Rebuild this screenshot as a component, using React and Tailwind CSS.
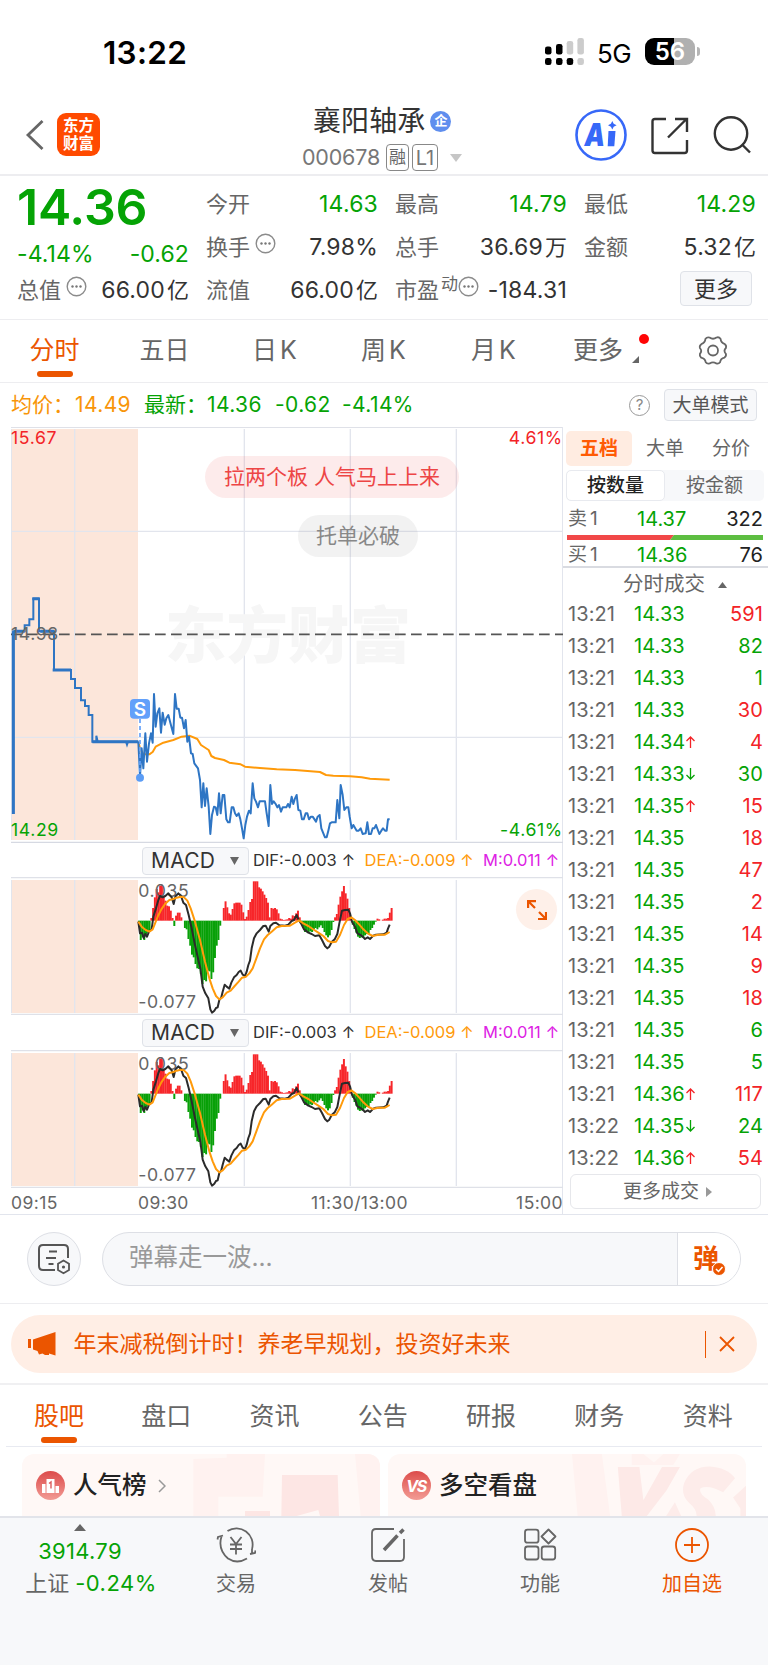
import React from 'react';

const font = "font-[Inter,'Noto_Sans_CJK_SC',sans-serif]";

const periods = [
  { label: '五日', width: 'w-[111px]' },
  { label: '日K', width: 'w-[109px]', latin: true },
  { label: '周K', width: 'w-[109px]', latin: true },
  { label: '月K', width: 'w-[111px]', latin: true },
];

const trades = [
  ['13:21', '14.33', '', 591, 'buy'],
  ['13:21', '14.33', '', 82, 'sell'],
  ['13:21', '14.33', '', 1, 'sell'],
  ['13:21', '14.33', '', 30, 'buy'],
  ['13:21', '14.34', 'up', 4, 'buy'],
  ['13:21', '14.33', 'down', 30, 'sell'],
  ['13:21', '14.35', 'up', 15, 'buy'],
  ['13:21', '14.35', '', 18, 'buy'],
  ['13:21', '14.35', '', 47, 'buy'],
  ['13:21', '14.35', '', 2, 'buy'],
  ['13:21', '14.35', '', 14, 'buy'],
  ['13:21', '14.35', '', 9, 'buy'],
  ['13:21', '14.35', '', 18, 'buy'],
  ['13:21', '14.35', '', 6, 'sell'],
  ['13:21', '14.35', '', 5, 'sell'],
  ['13:21', '14.36', 'up', 117, 'buy'],
  ['13:22', '14.35', 'down', 24, 'sell'],
  ['13:22', '14.36', 'up', 54, 'buy'],
];

// MACD histogram, one value per minute from 09:30
const histogram = [
  -15, -58, -50, -58, -42, -36, -30, 8, 38, 70, 95, 85, 105, 108, 75, 60, 45, 43, 30, 8, -16, 15, 24, 24, 10, 0,
  -22, -26, -55, -75, -102, -110, -130, -143, -145, -160, -190, -178, -182, -150, -152, -175, -155, -112, -75, -58,
  -15, 0, 38, 58, 40, 22, 18, 35, 52, 54, 54, 54, 48, 25, 5, 12, 32, 56, 65, 118, 118, 118, 100, 96, 88, 78, 68, 54,
  10, 38, 36, 38, 34, 22, 6, 4, 2, 3, 4, 8, 6, 16, 14, 22, 30, 10, -5, -20, -34, -32, -36, -32, -34, -26, -22, -26,
  -20, -14, -22, -34, -44, -50, -44, -28, -4, 10, 20, 48, 72, 88, 104, 82, 66, 38, 12, -12, -25, -36, -48, -52, -50,
  -52, -44, -40, -40, -28, -22, -12, -3, 6, 4, 0, 3, 6, 6, 8, 24, 38,
];

const auctionLine =
  '40,1182 40,634 74,634 74,616 88,616 88,598 100,598 100,536 117,536 117,634 162,634 162,750 213,750 213,777 225,777 225,804 243,804 243,841 255,841 255,858 266,858 266,885 277,885 277,965 289,965 289,947 293,965 378,965 381,974 384,965 415,965';

const priceLine =
  '415,965 420,1070 425,985 430,1045 436,940 441,1025 447,970 453,940 458,968 462,822 467,920 472,880 478,865 483,938 488,878 494,914 499,895 505,885 511,908 520,942 525,822 530,866 536,866 541,893 546,893 552,925 557,900 562,965 567,950 573,1000 578,1002 583,1030 594,1045 600,1080 605,1162 610,1090 615,1158 620,1105 626,1160 631,1242 636,1185 642,1160 647,1162 652,1185 657,1120 662,1180 668,1125 673,1125 679,1198 684,1207 689,1207 695,1162 700,1162 705,1180 710,1188 716,1180 721,1198 726,1225 731,1255 736,1215 741,1190 747,1172 752,1180 758,1090 763,1135 768,1145 774,1162 779,1144 795,1144 800,1180 806,1218 811,1095 816,1152 821,1144 827,1152 832,1162 837,1155 843,1175 848,1162 859,1162 864,1152 869,1162 875,1130 880,1152 885,1135 890,1125 895,1170 901,1172 906,1198 911,1198 917,1180 922,1180 927,1198 933,1190 938,1190 948,1205 953,1190 959,1185 964,1225 970,1240 975,1252 980,1252 985,1232 990,1210 995,1207 1007,1207 1012,1140 1018,1195 1022,1095 1028,1125 1033,1170 1039,1162 1045,1162 1049,1190 1055,1225 1060,1215 1070,1232 1076,1232 1082,1225 1088,1242 1097,1240 1102,1207 1107,1242 1113,1242 1118,1225 1123,1225 1128,1215 1138,1242 1144,1232 1149,1225 1155,1232 1160,1232 1164,1198 1169,1198';

const averageLine =
  '415,965 420,985 430,1003 448,1003 458,996 467,980 490,968 520,960 545,950 568,947 592,957 603,975 626,990 634,1008 645,1014 672,1020 688,1028 722,1033 735,1040 780,1044 830,1048 885,1050 960,1056 978,1065 1000,1067 1050,1069 1085,1072 1110,1076 1169,1079';

const difLine =
  '415,245 420,280 426,278 431,294 436,282 441,290 447,275 455,268 460,230 468,205 475,180 480,168 488,172 496,168 505,160 515,172 521,192 526,170 535,160 543,168 550,188 558,195 566,225 574,260 585,315 595,360 601,385 608,440 616,460 625,475 631,508 636,518 643,512 648,504 653,502 658,480 664,472 668,455 674,434 680,440 688,446 694,428 702,412 710,405 716,396 722,392 728,404 735,408 740,395 745,375 750,362 755,325 762,295 770,280 780,270 790,258 797,257 806,275 811,258 820,250 828,248 838,256 855,257 865,254 875,243 882,240 890,225 896,240 903,250 912,268 925,278 935,282 945,288 958,286 966,300 975,318 982,325 988,320 995,306 1004,298 1012,282 1018,250 1026,212 1035,210 1045,209 1050,220 1056,245 1066,262 1072,280 1080,284 1088,290 1095,297 1103,292 1110,297 1120,287 1128,284 1150,283 1160,278 1164,266 1169,254';

const deaLine =
  '415,245 425,260 437,270 448,275 458,268 466,248 474,228 484,208 495,192 508,180 520,177 530,173 542,170 552,172 562,182 572,205 585,245 600,300 615,365 628,415 638,445 648,468 658,478 668,472 680,458 692,452 704,438 716,425 726,413 738,410 748,400 758,385 768,358 780,325 792,298 803,285 815,275 830,262 845,258 870,257 885,248 897,241 910,250 925,258 938,267 955,278 970,288 984,303 996,307 1008,305 1020,285 1032,255 1043,237 1054,232 1065,240 1078,254 1090,268 1103,280 1118,288 1135,284 1155,284 1169,276';

const boardTabs = ['盘口', '资讯', '公告', '研报', '财务', '资料'];

const Dots = () => (
  <svg className="shrink-0" width="21" height="21" viewBox="0 0 21 21" fill="none">
    <circle cx="10.5" cy="10.5" r="9.3" stroke="#8b8b8b" strokeWidth="1.4" />
    <circle cx="6.5" cy="10.5" r="1.2" fill="#777" />
    <circle cx="10.5" cy="10.5" r="1.2" fill="#777" />
    <circle cx="14.5" cy="10.5" r="1.2" fill="#777" />
  </svg>
);

const Stat = ({ label, value, unit, green, extra }) => (
  <div className="flex h-full items-center justify-between whitespace-nowrap">
    <span className="flex items-center text-[22px] text-[#666]">
      {label}
      {extra}
    </span>
    <span className={green ? 'text-[23px] tracking-[0.2px] text-[#05a305]' : 'text-[23px] tracking-[0.2px] text-[#333]'}>
      {value}
      {unit && <span className="ml-[2px] text-[22px] tracking-normal">{unit}</span>}
    </span>
  </div>
);

const StatusBar = () => (
  <div className="flex h-[95px] items-start pt-[35px] pl-[103px]">
    <span className="w-[442px] text-[31.5px] leading-[35px] font-semibold tracking-[0.3px] text-black">13:22</span>
    <svg className="mt-[3px]" width="39" height="28" viewBox="0 0 39 28">
      <g fill="#000">
        <rect x="0" y="8.5" width="6.500" height="8" rx="2.300" />
        <rect x="11" y="6" width="6.500" height="10.500" rx="2.300" />
        <rect x="0" y="20" width="6.500" height="7" rx="2.300" />
        <rect x="11" y="20" width="6.500" height="7" rx="2.300" />
        <rect x="21.700" y="20" width="6.500" height="7" rx="2.300" />
      </g>
      <g fill="#ccc">
        <rect x="21.700" y="3" width="6.500" height="13.500" rx="2.300" />
        <rect x="32.400" y="0" width="6.500" height="16.500" rx="2.300" />
        <rect x="32.400" y="20" width="6.500" height="7" rx="2.300" />
      </g>
    </svg>
    <span className="ml-[13px] w-[48px] text-[26px] leading-[37px] tracking-tight text-black">5G</span>
    <div className="mt-[3px] flex h-[27px] w-[50px] items-center justify-center rounded-[9px] bg-linear-to-r from-black from-57% to-[#b0b0b0] to-57% text-[24px] font-semibold text-white">
      56
    </div>
    <div className="mt-[12px] ml-[1.5px] h-[9px] w-[3px] rounded-r-full bg-[#b5b5b5]" />
  </div>
);

const Header = () => (
  <header className="flex h-[81px] items-start border-b-2 border-[#ededf0]">
    <svg className="mt-[24px] ml-[25px]" width="20" height="32" viewBox="0 0 20 32" fill="none">
      <path d="M17.500 2 3 16l14.500 14" stroke="#666" strokeWidth="2.8" />
    </svg>
    <div className="mt-[18px] ml-[12px] flex h-[43px] w-[43px] flex-col items-center justify-center rounded-[9px] bg-[#ff4a00] text-[15.5px] leading-[18px] font-bold text-white">
      <span>东方</span>
      <span>财富</span>
    </div>
    <div className="ml-[198px] w-[277px] pl-[32px]">
      <div className="mt-[9px] -ml-[17px] flex h-[34px] items-center text-[28px] text-[#333]">
        <span className="tracking-[0.1px]">襄阳轴承</span>
        <span className="ml-[5px] flex h-[21px] w-[21px] items-center justify-center rounded-full bg-[#5f8eee] text-[13px] font-bold text-white">
          企
        </span>
      </div>
      <div className="-ml-[28px] flex h-[39px] items-center whitespace-nowrap text-[21.500px] text-[#777]">
        <span className="w-[84px] tracking-[-0.2px]">000678</span>
        <span className="mr-[3px] flex h-[27px] w-[23px] items-center justify-center rounded-[4px] border-[1.5px] border-[#888] text-[17px] text-[#666]">
          融
        </span>
        <span className="flex h-[27px] w-[26px] items-center justify-center rounded-[4px] border-[1.5px] border-[#888] text-[20px]">
          L1
        </span>
        <svg className="ml-[12px]" width="12" height="8" viewBox="0 0 12 8">
          <path d="M0 0h12L6 8z" fill="#c6c6c6" />
        </svg>
      </div>
    </div>
    <svg className="mt-[14px]" width="52" height="52" viewBox="0 0 52 52">
      <circle cx="26" cy="26" r="24.500" fill="none" stroke="#3768f8" strokeWidth="2.600" />
      <text x="9.500" y="37" fontSize="31" fontWeight="900" fontStyle="italic" fill="#3768f8" textLength="20.500" lengthAdjust="spacingAndGlyphs">
        A
      </text>
      <path d="M33.500 22h7l-1.200 15.200h-6.600z" fill="#3768f8" />
      <path d="m37.300 12 1.400 2.800 2.900 1.500-2.900 1.500-1.400 2.800-1.400-2.800-2.900-1.500 2.900-1.500z" fill="#3768f8" />
    </svg>
    <svg className="mt-[21px] ml-[23px]" width="40" height="40" viewBox="0 0 40 40" fill="none" stroke="#333" strokeWidth="2.400">
      <path d="M16 3H5Q2.500 3 2.500 5.500v29Q2.500 37 5 37h29.500q2.500 0 2.500-2.500V24M18 21.500 36.500 3M25 3h12v13" />
    </svg>
    <svg className="mt-[20px] ml-[22px]" width="42" height="42" viewBox="0 0 42 42" fill="none" stroke="#333" strokeWidth="2.400">
      <circle cx="19" cy="18.500" r="16.200" />
      <path d="m30 29.500 8 8" />
    </svg>
  </header>
);

const Quote = () => (
  <section className="h-[144px] border-b border-[#ededf0] pt-[7px] pl-[17px]">
    <div className="grid h-[129px] grid-cols-[172px_172px_172px_172px] gap-x-[17px]">
      <div className="flex flex-col">
        <span className="h-[48px] text-[50px] leading-[48px] font-semibold tracking-[-0.2px] text-[#05a305]">14.36</span>
        <div className="flex h-[38px] items-end justify-between text-[23px] leading-[29px] tracking-[0.1px] text-[#05a305]">
          <span>-4.14%</span>
          <span>-0.62</span>
        </div>
        <div className="h-[43px]">
          <Stat label="总值" value="66.00" unit="亿" extra={<span className="mb-2 ml-[5px]"><Dots /></span>} />
        </div>
      </div>
      <div className="grid grid-rows-3">
        <Stat label="今开" value="14.63" green />
        <Stat label="换手" value="7.98%" extra={<span className="mb-2 ml-[5px]"><Dots /></span>} />
        <Stat label="流值" value="66.00" unit="亿" />
      </div>
      <div className="grid grid-rows-3">
        <Stat label="最高" value="14.79" green />
        <Stat label="总手" value="36.69" unit="万" />
        <Stat
          label="市盈"
          value="-184.31"
          extra={
            <span className="mb-2 flex items-center">
              <span className="-mt-1 ml-[2px] text-[17px]">动</span>
              <Dots />
            </span>
          }
        />
      </div>
      <div className="grid grid-rows-3">
        <Stat label="最低" value="14.29" green />
        <Stat label="金额" value="5.32" unit="亿" />
        <div className="flex items-center justify-end pr-[4px] pb-[4px]">
          <button className="h-[35px] w-[72px] rounded-[4px] border-[1.5px] border-[#dfe2e8] bg-[#f7f8fa] text-[22px] leading-none text-[#333]">
            更多
          </button>
        </div>
      </div>
    </div>
  </section>
);

const PeriodTabs = () => (
  <nav className="flex h-[63px] items-center border-b border-[#ededf0] text-[25px] text-[#666]">
    <div className="relative flex h-full w-[109px] items-center justify-center text-[#eb5500]">
      分时
      <i className="absolute bottom-[5px] h-[6px] w-[36px] rounded-[3px] bg-[#eb5500]" />
    </div>
    {periods.map((p) => (
      <div key={p.label} className={`flex justify-center ${p.width}`}>
        {p.latin ? (
          <>
            {p.label[0]}
            <span className="ml-[3px]">K</span>
          </>
        ) : (
          p.label
        )}
      </div>
    ))}
    <div className="relative w-[102px] pl-[24px]">
      更多
      <i className="absolute top-[2px] left-[90px] h-[10px] w-[10px] rounded-full bg-[#ff0505]" />
      <svg className="absolute top-[24px] left-[83px]" width="7" height="7" viewBox="0 0 7 7">
        <path d="M7 0v7H0z" fill="#666" />
      </svg>
    </div>
    <svg className="-mt-[3px] ml-[46px]" width="32" height="32" viewBox="0 0 32 32" fill="none" stroke="#666" strokeWidth="1.800">
      <path
        strokeLinejoin="round"
        d="M12.500 3.500q3.500 2.500 7 0 2.500-.8 4 1.200.4 4.200 4.400 5.500 1.800 1.300 1 3.800-2.800 2.800 0 5.800.6 2.400-1.400 3.800-4 .8-4.400 4.600-1.600 2-3.800 1.200-3.300-2-6.600 0-2.600.8-4-1.200-.6-3.800-4.600-4.600-1.800-1.600-1.200-3.800 2.600-2.900 0-5.800-.6-2.500 1.400-3.800 3.800-1.200 4.200-5.500 1.500-1.900 4-1.200z"
      />
      <circle cx="16" cy="16.500" r="5" />
    </svg>
  </nav>
);

const PriceSummary = () => (
  <div className="flex h-[44px] items-center pr-[11px] pl-[11px] text-[21px] whitespace-nowrap">
    <span className="w-[64px] text-[#f89509]">均价：</span>
    <span className="w-[69px] tracking-[0.4px] text-[#f89509]">14.49</span>
    <span className="w-[63px] text-[#05a305]">最新：</span>
    <span className="w-[68px] tracking-[0.4px] text-[#05a305]">14.36</span>
    <span className="w-[67px] tracking-[0.4px] text-[#05a305]">-0.62</span>
    <span className="tracking-[0.4px] text-[#05a305]">-4.14%</span>
    <span className="ml-auto flex h-[21px] w-[21px] items-center justify-center rounded-full border-[1.5px] border-[#999] text-[15px] text-[#888]">
      ?
    </span>
    <button className="ml-[14px] h-[32px] w-[93px] rounded-[4px] border-[1.5px] border-[#dfe2e8] bg-[#f7f8fa] text-[19px] leading-none text-[#555]">
      大单模式
    </button>
  </div>
);

const Grid = ({ top, bottom }) => (
  <g>
    <rect x="33" y={top} width="381" height={bottom - top} fill="#fce6da" />
    <path d={`M34 ${top}V${bottom}M224 ${top}V${bottom}M733 ${top}V${bottom}M1051 ${top}V${bottom}M1369 ${top}V${bottom}`} stroke="#e2e5ed" strokeWidth="4" />
  </g>
);

const PriceChart = () => (
  <div className="relative h-[416px]">
    <svg width="552" height="416" viewBox="33 21 1656 1248" fill="none">
      <Grid top={27} bottom={1260} />
      <path d="M33 334H1689M33 952H1689" stroke="#e2e5ed" strokeWidth="4" />
      <path d="M33 1267H1689" stroke="#d6d9e2" strokeWidth="4" />
      <text x="495" y="714" fontSize="184" fontWeight="900" fill="#f6f6f6" textLength="738">
        东方财富
      </text>
      <path d="M33 643H1689" stroke="#555" strokeWidth="5" strokeDasharray="32 16" />
      <polyline points={averageLine} stroke="#ff9a0a" strokeWidth="6" strokeLinejoin="round" />
      <polyline points={auctionLine} stroke="#2e75c4" strokeWidth="6" />
      <path d="M40 1182V634M42 634H74M121 634H162M158 750H213M277 965H415M97 536H119" stroke="#2e75c4" strokeWidth="9" />
      <polyline points={priceLine} stroke="#2e75c4" strokeWidth="6" strokeLinejoin="round" />
      <path d="M420 897V1060" stroke="#62a0fa" strokeWidth="5" strokeDasharray="12 9" />
      <circle cx="420" cy="1073" r="12" fill="#5b9cf5" />
      <rect x="390" y="837" width="60" height="59" rx="12" fill="#62a0fa" />
      <text x="420" y="887" fontSize="57" fontWeight="600" fill="#fff" textAnchor="middle">
        S
      </text>
      <g fontSize="53" letterSpacing="1.8">
        <text x="33" y="73" fill="#f32327">15.67</text>
        <text x="33" y="661" fill="#666">14.98</text>
        <text x="33" y="1247" fill="#05a305">14.29</text>
        <text x="1688" y="73" fill="#f32327" textAnchor="end">4.61%</text>
        <text x="1688" y="1247" fill="#05a305" textAnchor="end">-4.61%</text>
      </g>
    </svg>
    <span className="absolute top-[29px] left-[194px] flex h-[42px] w-[254px] items-center justify-center rounded-full bg-[#ed4545]/11 text-[21px] whitespace-nowrap text-[#ed4545]">
      拉两个板 人气马上上来
    </span>
    <span className="absolute top-[88px] left-[287px] flex h-[42px] w-[120px] items-center justify-center rounded-full bg-[#888]/11 text-[21px] whitespace-nowrap text-[#888]">
      托单必破
    </span>
  </div>
);

const MacdLegend = () => (
  <div className="flex h-[35px] items-center pl-[131px] text-[16.500px] whitespace-nowrap text-[#333]">
    <div className="mr-[4px] flex h-[28px] w-[107px] items-center justify-between rounded-[4px] border-[1.5px] border-[#dfe2e8] bg-[#f7f8fa] pr-[9px] pl-[8px] text-[21px] tracking-[0.2px]">
      MACD
      <svg width="9" height="8" viewBox="0 0 8 7">
        <path d="M0 0h8L4 7z" fill="#666" />
      </svg>
    </div>
    <span className="w-[111.500px]">DIF:-0.003 ↑</span>
    <span className="w-[118.500px] text-[#ff9a0a]">DEA:-0.009 ↑</span>
    <span className="text-[#dd22e4]">M:0.011 ↑</span>
  </div>
);

const MacdChart = ({ expand }) => (
  <div className="relative h-[138px]">
    <svg width="552" height="138" viewBox="33 111 1656 414" fill="none">
      <path d="M33 112.500H1689M33 523H1689" stroke="#dfe1e8" strokeWidth="4" />
      <Grid top={120} bottom={519} />
      {histogram.map((v, i) => (
        <rect
          key={i}
          x={414 + i * 5.3}
          y={v > 0 ? 242 - v : 242}
          width="5.9"
          height={Math.abs(v)}
          fill={v > 0 ? '#f7262a' : '#08a008'}
        />
      ))}
      <g fontSize="53" letterSpacing="1.8" fill="#666">
        <text x="415" y="170">0.035</text>
        <text x="415" y="503">-0.077</text>
      </g>
      <polyline points={difLine} stroke="#2b2b2b" strokeWidth="6" strokeLinejoin="round" />
      <polyline points={deaLine} stroke="#ff9a0a" strokeWidth="6" strokeLinejoin="round" />
    </svg>
    {expand && (
      <span className="absolute top-[12px] right-[6px] flex h-[41px] w-[41px] items-center justify-center rounded-full bg-[#fef0e9]">
        <svg width="20" height="20" viewBox="0 0 20 20" fill="none" stroke="#eb5500" strokeWidth="2.200">
          <path d="M1.100 8V1.100H9M1.500 1.500 8 8M19 12v7.000H11M18.500 18.500 12 12" />
        </svg>
      </span>
    )}
  </div>
);

const TradeArrow = ({ dir }) => (
  <svg className="ml-[1px]" width="9" height="12" viewBox="0 0 9 12" fill="none" stroke={dir === 'up' ? '#f32327' : '#05a305'} strokeWidth="1.300">
    <path d={dir === 'up' ? 'M4.500 12V1M.500 5l4-4 4 4' : 'M4.500 0v11M.500 7l4 4 4-4'} />
  </svg>
);

const OrderBook = () => (
  <aside className="-ml-[1px] flex w-[206px] flex-col border-l-[1.5px] border-[#e2e5ed] text-[19px] text-[#666]">
    <div className="mt-[4px] flex h-[35px] items-center">
      <span className="ml-[3px] flex h-[35px] w-[66px] items-center justify-center rounded-[5px] bg-[#ffece1] pt-[1px] font-bold text-[#ff5b05]">
        五档
      </span>
      <span className="w-[66px] pt-[2px] text-center">大单</span>
      <span className="w-[66px] pt-[2px] text-center">分价</span>
    </div>
    <div className="mt-[4px] ml-[3px] flex h-[31px] w-[198px] items-center rounded-[5px] bg-[#f7f8fa]">
      <span className="flex h-[31px] w-[99px] items-center justify-center rounded-[5px] border border-[#e8eaef] bg-white pt-[2px] font-medium text-[#222]">
        按数量
      </span>
      <span className="flex-1 pt-[2px] text-center">按金额</span>
    </div>
    <div className="flex h-[34px] items-center pt-[2px] pr-[5px] pl-[5px]">
      <span className="w-[69px]">
        卖<span className="ml-[3px]">1</span>
      </span>
      <span className="text-[20px] text-[#05a305]">14.37</span>
      <span className="ml-auto text-[20px] text-[#222]">322</span>
    </div>
    <svg className="ml-[4px]" width="196" height="5" viewBox="0 0 196 5">
      <path d="M0 0h107l-4 5H0z" fill="#f14848" />
      <path d="M107 0h89v5h-93z" fill="#5dbe41" />
    </svg>
    <div className="flex h-[28px] items-center border-b-2 border-[#d9dbe1] pt-[4px] pr-[5px] pl-[5px]">
      <span className="w-[69px]">
        买<span className="ml-[3px]">1</span>
      </span>
      <span className="text-[20px] text-[#05a305]">14.36</span>
      <span className="ml-auto text-[20px] text-[#222]">76</span>
    </div>
    <div className="flex h-[29px] items-center pt-[4px] pl-[60px] text-[20.500px]">
      分时成交
      <svg className="ml-[13px]" width="9" height="6" viewBox="0 0 9 6">
        <path d="M4.500 0 9 6H0z" fill="#666" />
      </svg>
    </div>
    {trades.map(([time, price, dir, volume, side], i) => (
      <div key={i} className="flex h-[32.06px] items-center pt-[1px] pr-[5px] pl-[5px] text-[20px] tracking-[0.1px]">
        <span className="w-[66px]">{time}</span>
        <span className="text-[#05a305]">{price}</span>
        {dir && <TradeArrow dir={dir} />}
        <span className={side === 'buy' ? 'ml-auto text-[#f32327]' : 'ml-auto text-[#05a305]'}>{volume}</span>
      </div>
    ))}
    <div className="ml-[7px] flex h-[35px] w-[191px] items-center justify-center rounded-[6px] border border-[#e6e7eb] pt-[2px]">
      <span className="ml-[4px]">更多成交</span>
      <svg className="ml-[7px]" width="6" height="10" viewBox="0 0 6 10">
        <path d="M0 0v10l6-5z" fill="#999" />
      </svg>
    </div>
  </aside>
);

const DanmuBar = () => (
  <section className="flex h-[89px] items-start border-b border-[#ededf0] pt-[17px]">
    <div className="ml-[27px] flex h-[54px] w-[54px] items-center justify-center rounded-full border border-[#dddfe5] bg-[#f7f8fa]">
      <svg width="34" height="32" viewBox="0 0 34 32" fill="none" stroke="#555" strokeWidth="2">
        <path d="M18 27H6q-4 0-4-4V6q0-4 4-4h21q4 0 4 4v9M12 8.500h8M9 15h10M11.500 21h5" />
        <path d="m26.500 17.500 5.500 3.200v6.400l-5.500 3.200-5.500-3.200v-6.400z" strokeWidth="1.800" />
        <circle cx="26.500" cy="24" r="1.600" fill="#555" stroke="none" />
      </svg>
    </div>
    <div className="ml-[21px] flex h-[54px] w-[639px] items-center overflow-hidden rounded-full border border-[#dddfe5] bg-[#f7f8fa]">
      <span className="flex-1 pb-[3px] pl-[26px] text-[24.500px] text-[#999]">弹幕走一波...</span>
      <div className="relative h-full w-[63px] border-l border-[#dddfe5] bg-white pt-[10px] pl-[15px] text-[26px] leading-[32px] font-bold text-[#eb5500]">
        弹
        <svg className="absolute top-[29px] left-[34px]" width="14" height="14" viewBox="0 0 14 14">
          <circle cx="7" cy="7" r="6.500" fill="#eb5500" stroke="#fff" />
          <path d="m4 7 2.500 2.500L10.500 5" fill="none" stroke="#fff" strokeWidth="1.500" />
        </svg>
      </div>
    </div>
  </section>
);

const Notice = () => (
  <section className="flex h-[81px] items-start border-b-2 border-[#f0f0f2] px-[11px] pt-[11px]">
    <div className="flex h-[58px] w-full items-center rounded-[29px] bg-[#ffeee5] text-[#eb5500]">
      <svg className="ml-[17px]" width="28" height="24" viewBox="0 0 28 24" fill="#eb5500">
        <path d="M0 7h3v9H0zM5 7.500 27.500 0v23.500L21 21.500v1.500h-4l-2.500-1.500-3.500 1-1.500-3.500L5 17.500z" />
      </svg>
      <span className="ml-[17.500px] text-[23px]">年末减税倒计时！养老早规划，投资好未来</span>
      <i className="ml-auto h-[27px] w-[1.500px] bg-[#eb5500]" />
      <svg className="mr-[22px] ml-[13px]" width="16" height="16" viewBox="0 0 16 16" fill="none" stroke="#eb5500" strokeWidth="1.800">
        <path d="m1 1 14 14M15 1 1 15" />
      </svg>
    </div>
  </section>
);

const BoardTabs = () => (
  <nav className="mx-[6px] flex h-[62px] items-center border-b-[1.5px] border-[#e8eaf1] text-[25px] text-[#666]">
    <div className="relative flex h-full w-[106px] items-center justify-center pt-[2px] text-[#eb5500]">
      股吧
      <i className="absolute bottom-[3px] h-[6px] w-[36px] rounded-[3px] bg-[#eb5500]" />
    </div>
    {boardTabs.map((t) => (
      <div key={t} className="w-[108.300px] pt-[2px] text-center">
        {t}
      </div>
    ))}
  </nav>
);

const Cards = () => (
  <section className="flex h-[69px] gap-[8px] overflow-hidden pt-[7px] pl-[22px]">
    <div className="relative h-[110px] w-[358px] overflow-hidden rounded-t-[12px] bg-[#fff8f6]">
      <svg className="absolute top-0 left-[170px]" width="188" height="62" viewBox="576 57 564 186">
        <path d="M580 72 680 68V57H795L788 185H655V243H580zM1065 57H1140V243H1082z" fill="#fff2f0" />
        <path d="M735 228H810V243H735zM846 120H1013L1017 243H960L955 225 890 243H844z" fill="#fde6e4" />
      </svg>
      <div className="relative flex h-[63px] items-center pl-[14px]">
        <svg width="29" height="29" viewBox="0 0 29 29">
          <defs>
            <linearGradient id="rankFill" x1="0" y1="0" x2="0" y2="1">
              <stop offset="0" stopColor="#dc4b4b" />
              <stop offset="1" stopColor="#f29b94" />
            </linearGradient>
          </defs>
          <circle cx="14.500" cy="14.500" r="14.500" fill="url(#rankFill)" />
          <path d="M6 13h3.500v9H6zM10.500 8h8v14h-8zM19.500 15H23v7h-3.500z" fill="#fff" />
          <path d="m13 12.500 2-1.500v6.500" stroke="#dc5b5b" strokeWidth="1.400" fill="none" />
        </svg>
        <span className="ml-[8px] text-[24.500px] font-medium text-[#222]">人气榜</span>
        <svg className="ml-[11px]" width="8" height="14" viewBox="0 0 8 14" fill="none" stroke="#999" strokeWidth="1.500">
          <path d="m1 1 6 6-6 6" />
        </svg>
      </div>
      <p className="relative -mt-[1px] pl-[28px] text-[22px] leading-[22px] text-[#999]">昨日排名较前上升</p>
    </div>
    <div className="relative h-[110px] w-[358px] overflow-hidden rounded-t-[12px] bg-[#fff8f6]">
      <svg className="absolute top-0 left-[180px]" width="178" height="62" viewBox="563 41 536 186">
        <path d="M575 41H665L690 228H592zM755 41H790L822 66 850 41H900L880 74H755z" fill="#fff2f0" />
        <path d="M713 80H778L790 180 846 80H900L860 150 800 228H725z" fill="#fde9e7" />
        <path d="M858 228 885 186 904 228zM912 130Q932 78 990 78 1045 82 1066 114L1030 156Q985 132 962 144 955 160 985 178 1008 200 1008 228H950Q952 208 928 188 902 165 912 130zM1099 136 1060 172 1082 205V228H1099z" fill="#fdecea" />
      </svg>
      <div className="relative flex h-[63px] items-center pl-[14px]">
        <span className="flex h-[29px] w-[29px] items-center justify-center rounded-full bg-linear-to-b from-[#dc4b4b] to-[#f29b94] pr-[1px] text-[16px] font-bold tracking-[-1.5px] text-white italic">
          VS
        </span>
        <span className="ml-[8px] text-[24.500px] font-medium text-[#222]">多空看盘</span>
      </div>
    </div>
  </section>
);

const NavItem = ({ label, active, children }) => (
  <div className={active ? 'flex w-[152px] flex-col items-center text-[#eb5500]' : 'flex w-[152px] flex-col items-center text-[#666]'}>
    <svg className="mt-[7px]" width="40" height="40" viewBox="0 0 40 40" fill="none" stroke="currentColor" strokeWidth="1.800">
      {children}
    </svg>
    <span className="mt-[4px] text-[20px] leading-[30px]">{label}</span>
  </div>
);

const BottomBar = () => (
  <footer className="flex h-[149px] border-t-2 border-[#e2e4ea] bg-[#f7f8fa]">
    <div className="flex w-[160px] flex-col items-center">
      <svg className="mt-[6px]" width="12" height="7" viewBox="0 0 12 7">
        <path d="m6 0 6 7H0z" fill="#666" />
      </svg>
      <span className="mt-[4px] text-[22px] leading-[32px] tracking-[0.3px] text-[#05a305]">3914.79</span>
      <span className="ml-[22px] flex items-center text-[22px] leading-[32px] whitespace-nowrap text-[#666]">
        上证
        <span className="ml-[6px] tracking-[0.5px] text-[#05a305]">-0.24%</span>
      </span>
    </div>
    <NavItem label="交易">
      <path d="M11.500 6A16.200 16.200 0 0 1 36 24M5.500 11.500Q1.500 24 12 33.500q9 6 19 0" />
      <path d="M1.500 14.500 2 12l5-1.500M39.500 25.500 39 28l-5 1M36 24v4" />
      <path d="m14.500 12 5.500 7 5.500-7M20 19v10.500M14 19.500h12M14 24h12" />
    </NavItem>
    <NavItem label="发帖">
      <path d="M26 4H8Q4 4 4 8v23q0 5 4 5h24q4 0 4-4V14" />
      <path d="m16 25 13.500-14.500M32 8l3.500-3.500" strokeWidth="3.500" />
    </NavItem>
    <NavItem label="功能">
      <rect x="5" y="4.700" width="13.500" height="13" rx="2.500" />
      <rect x="5" y="21.500" width="13.500" height="13" rx="2.500" />
      <rect x="21.700" y="21.500" width="13.500" height="13" rx="2.500" />
      <path strokeLinejoin="round" d="m28.500 4.500 7 7-7 7-7-7z" />
    </NavItem>
    <NavItem label="加自选" active>
      <circle cx="20" cy="20" r="16" />
      <path d="M20 12v16M12 20h16" />
    </NavItem>
  </footer>
);

const App = () => {
  return (
    <div className={`h-[1665px] w-[768px] overflow-hidden bg-white ${font}`}>
      <StatusBar />
      <Header />
      <Quote />
      <PeriodTabs />
      <PriceSummary />
      <main className="flex h-[788px] border-b border-[#e2e5ed]">
        <div className="ml-[11px] w-[552px] border-t border-[#dfe1e8]">
          <div className="-mt-px">
            <PriceChart />
          </div>
          <MacdLegend />
          <div className="-mt-px">
            <MacdChart expand />
          </div>
          <MacdLegend />
          <MacdChart />
          <div className="relative flex h-[28px] items-center justify-between pt-[3px] text-[17.500px] tracking-[0.4px] text-[#666]">
            <span>09:15</span>
            <span className="absolute left-[127px]">09:30</span>
            <span className="absolute left-[300px]">11:30/13:00</span>
            <span>15:00</span>
          </div>
        </div>
        <OrderBook />
      </main>
      <DanmuBar />
      <Notice />
      <BoardTabs />
      <Cards />
      <BottomBar />
    </div>
  );
};

export default App;
